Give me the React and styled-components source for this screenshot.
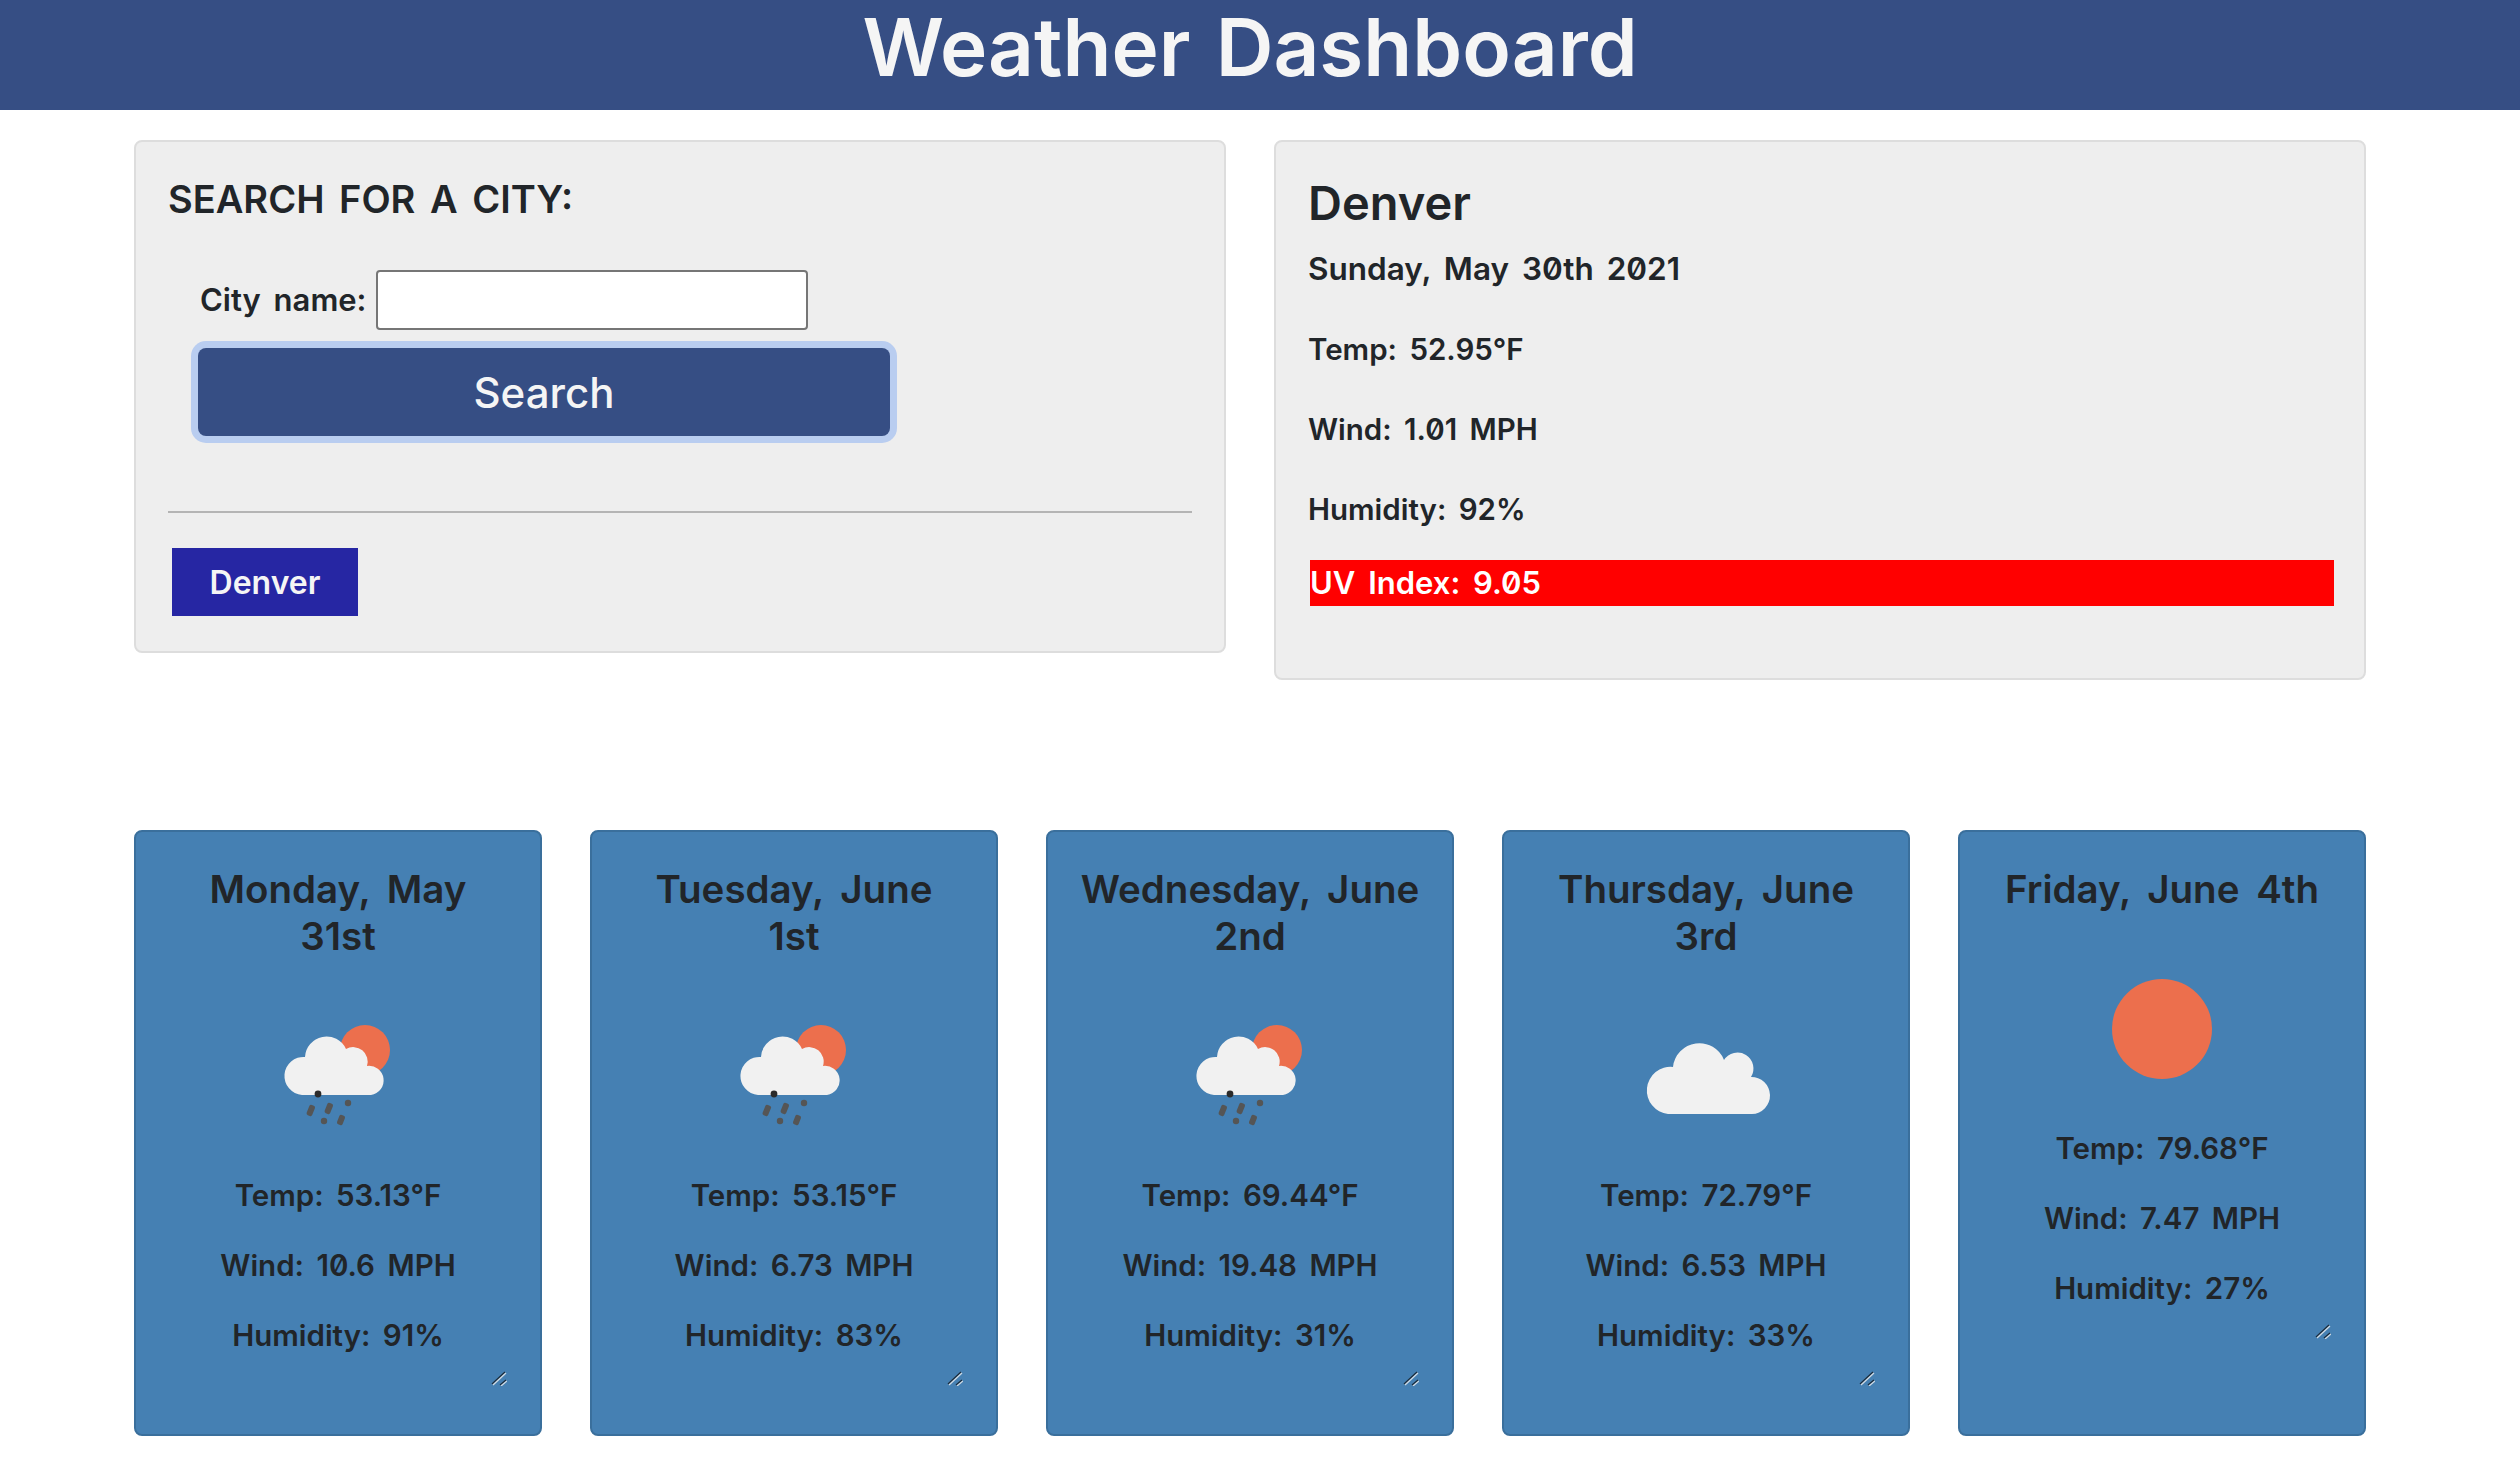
import styled, { createGlobalStyle } from "styled-components"

const GlobalStyle = createGlobalStyle`
  * { box-sizing: border-box; }
  body {
    margin: 0;
    background: #fff;
    color: #212529;
    font-family: Inter, "Noto Sans", sans-serif;
    font-feature-settings: "zero" 1;
    word-spacing: 5px;
  }
`

const Header = styled.header`
  height: 110px;
  padding-right: 20px;
  background: #364e84;
  display: flex;
  align-items: flex-start;
  justify-content: center;
`
const Title = styled.h1`
  margin: 0;
  color: #f5f5f5;
  font-size: 80px;
  font-weight: 600;
  line-height: 94px;
`
const Main = styled.main`
  padding: 30px 154px 0 134px;
  width: 2520px;
`
const Panels = styled.div`
  display: grid;
  grid-template-columns: 1092px 1092px;
  gap: 48px;
  align-items: start;
`
const Panel = styled.section`
  background: #eee;
  border: 2px solid #ddd;
  border-radius: 8px;
  padding: 32px 32px ${p => p.$bottom}px;
`
const SearchTitle = styled.h5`
  margin: 0 0 46px;
  font-size: 38px;
  font-weight: 600;
  line-height: 50px;
`
const FormRow = styled.div`
  display: flex;
  align-items: center;
  gap: 9px;
  padding-left: 32px;
  height: 60px;
`
const Label = styled.label`
  margin-bottom: 2px;
  font-size: 31px;
  font-weight: 600;
`
const CityInput = styled.input`
  width: 432px;
  height: 60px;
  background: #fff;
  border: 2px solid #767676;
  border-radius: 4px;
`
const SearchButton = styled.button`
  display: block;
  width: 692px;
  height: 88px;
  margin: 18px 0 0 30px;
  background: #364e84;
  color: #f5f5f5;
  border: 0;
  border-radius: 8px;
  box-shadow: 0 0 0 7px #b9cdf0;
  font: inherit;
  font-size: 42px;
  font-weight: 500;
`
const Divider = styled.hr`
  margin: 75px 0 35px;
  border: 0;
  border-top: 2px solid #b4b4b4;
`
const CityButton = styled.button`
  display: block;
  width: 186px;
  height: 68px;
  margin-left: 4px;
  background: #2626a3;
  color: #f5f5f5;
  border: 0;
  font: inherit;
  font-size: 32px;
  font-weight: 600;
`
const CityName = styled.h2`
  margin: 0 0 13px;
  font-size: 47px;
  font-weight: 600;
  line-height: 58px;
`
const InfoLine = styled.p`
  margin: 0 0 32px;
  font-size: ${p => (p.$large ? 31.5 : 29.5)}px;
  font-weight: 600;
  line-height: 48px;
`
const UvBar = styled.div`
  height: 46px;
  margin: -5px -2px 0 2px;
  background: #f00;
  color: #fff;
  font-size: 31px;
  font-weight: 600;
  line-height: 46px;
`
const Forecast = styled.div`
  display: grid;
  grid-template-columns: repeat(5, 408px);
  gap: 48px;
  margin-top: 150px;
`
const Card = styled.article`
  height: 606px;
  padding: 34px 32px 0;
  background: #4580b3;
  border: 2px solid #3a6f9c;
  border-radius: 8px;
`
const CardBody = styled.div`
  display: flow-root;
  position: relative;
  text-align: center;
`
const CardTitle = styled.h5`
  margin: 0 0 16px;
  font-size: 38.5px;
  font-weight: 600;
  line-height: 47px;
  word-spacing: 7px;
  white-space: pre-line;
`
const WeatherIcon = styled.svg`
  display: block;
  width: 200px;
  height: 200px;
  margin: 0 auto;
`
const CardLine = styled.p`
  margin: 0 0 32px;
  font-size: 29.5px;
  font-weight: 600;
  line-height: 38px;
`
const ResizeGrip = styled.svg`
  position: absolute;
  right: 1px;
  bottom: 0;
  width: 16px;
  height: 16px;
`

const Sun = ({ cx, cy, r }) => <circle cx={cx} cy={cy} r={r} fill="#ec6f4d" />

const RainIcon = () => (
  <WeatherIcon viewBox="0 0 200 200">
    <Sun cx={127} cy={74} r={25} />
    <path
      d="M64 119 A19 19 0 0 1 67 81 A21.5 21.5 0 0 1 108 73 A14.5 14.5 0 0 1 129 90 A14.5 14.5 0 0 1 133 119 Z"
      fill="#f1f1f1"
    />
    <circle cx={80} cy={118} r={3.4} fill="#2b2b2b" />
    <g fill="#555">
      <rect x={70} y={129} width={6} height={11} rx={2} transform="rotate(22 73 134)" />
      <rect x={88} y={127} width={6} height={11} rx={2} transform="rotate(22 91 132)" />
      <circle cx={110} cy={127} r={3.2} />
      <rect x={100} y={139} width={6} height={10} rx={2} transform="rotate(22 103 144)" />
      <circle cx={86} cy={145} r={3.2} />
    </g>
  </WeatherIcon>
)

const CloudIcon = () => (
  <WeatherIcon viewBox="0 0 200 200">
    <path
      d="M62 138 A23 23 0 0 1 67 91 A26.5 26.5 0 0 1 118 84 A15 15 0 0 1 145 101 A18.5 18.5 0 0 1 146 138 Z"
      fill="#f1f1f1"
    />
  </WeatherIcon>
)

const SunIcon = () => (
  <WeatherIcon viewBox="0 0 200 200">
    <Sun cx={100} cy={100} r={50} />
  </WeatherIcon>
)

const Grip = () => (
  <ResizeGrip viewBox="0 0 16 16">
    <path d="M1 14 L14 2 M9 15 L15 10" stroke="#1c2b3a" strokeWidth="1.3" fill="none" />
    <path d="M2 15 L15 3 M10 16 L16 11" stroke="#cfd9e2" strokeWidth="1.3" fill="none" />
  </ResizeGrip>
)

const forecast = [
  { date: "Monday, May\n31st", Icon: RainIcon, temp: "53.13", wind: "10.6", humidity: 91 },
  { date: "Tuesday, June\n1st", Icon: RainIcon, temp: "53.15", wind: "6.73", humidity: 83 },
  { date: "Wednesday, June\n2nd", Icon: RainIcon, temp: "69.44", wind: "19.48", humidity: 31 },
  { date: "Thursday, June\n3rd", Icon: CloudIcon, temp: "72.79", wind: "6.53", humidity: 33 },
  { date: "Friday, June 4th", Icon: SunIcon, temp: "79.68", wind: "7.47", humidity: 27 },
]

const App = () => {
  return (
    <>
      <GlobalStyle />
      <Header>
        <Title>Weather Dashboard</Title>
      </Header>
      <Main>
        <Panels>
          <Panel $bottom={35}>
            <SearchTitle>SEARCH FOR A CITY:</SearchTitle>
            <FormRow>
              <Label htmlFor="city">City name:</Label>
              <CityInput id="city" type="text" />
            </FormRow>
            <SearchButton>Search</SearchButton>
            <Divider />
            <CityButton>Denver</CityButton>
          </Panel>
          <Panel $bottom={72}>
            <CityName>Denver</CityName>
            <InfoLine $large>Sunday, May 30th 2021</InfoLine>
            <InfoLine>Temp: 52.95°F</InfoLine>
            <InfoLine>Wind: 1.01 MPH</InfoLine>
            <InfoLine>Humidity: 92%</InfoLine>
            <UvBar>UV Index: 9.05</UvBar>
          </Panel>
        </Panels>
        <Forecast>
          {forecast.map(({ date, Icon, temp, wind, humidity }) => (
            <Card key={date}>
              <CardBody>
                <CardTitle>{date}</CardTitle>
                <Icon />
                <CardLine>Temp: {temp}°F</CardLine>
                <CardLine>Wind: {wind} MPH</CardLine>
                <CardLine>Humidity: {humidity}%</CardLine>
                <Grip />
              </CardBody>
            </Card>
          ))}
        </Forecast>
      </Main>
    </>
  )
}

export default App
